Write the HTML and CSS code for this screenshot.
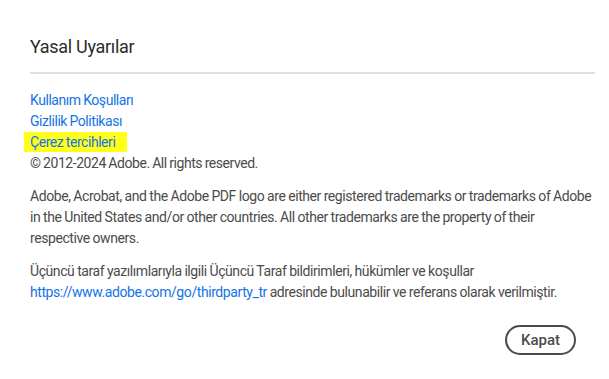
FILE: index.html
```html
<!DOCTYPE html>
<html lang="tr">
<head>
  <meta charset="UTF-8">
  <meta name="viewport" content="width=device-width, initial-scale=1.0">
  <title>Yasal Uyarılar</title>
  <link rel="stylesheet" href="styles.css">
</head>
<body>

  <div class="dialog">
    <h2 class="title">Yasal Uyarılar</h2>
    <hr class="divider">

    <ul class="links">
      <li><a href="#">Kullanım Koşulları</a></li>
      <li><a href="#">Gizlilik Politikası</a></li>
      <li><a href="#" class="marked">Çerez tercihleri</a></li>
      <li class="copy">© 2012-2024 Adobe. All rights reserved.</li>
    </ul>

    <p>Adobe, Acrobat, and the Adobe PDF logo are either registered trademarks or trademarks of Adobe in the United States and/or other countries. All other trademarks are the property of their respective owners.</p>

    <p>Üçüncü taraf yazılımlarıyla ilgili Üçüncü Taraf bildirimleri, hükümler ve koşullar <a href="#">https://www.adobe.com/go/thirdparty_tr</a> adresinde bulunabilir ve referans olarak verilmiştir.</p>

    <div class="actions">
      <button class="close">Kapat</button>
    </div>
  </div>

</body>
</html>
```

FILE: styles.css
```css
body {
  margin: 0;
  background: #ffffff;
  font-family: Roboto, "Liberation Sans", Arial, sans-serif;
  color: #4b4b4b;
}
.dialog {
  padding: 34px 14px 0 30px;
}
.title {
  margin: 0;
  font-size: 18px;
  font-weight: normal;
  letter-spacing: -0.3px;
  color: #2c2c2c;
  line-height: 26px;
}
.divider {
  margin: 12px 0 16px;
  border: none;
  border-top: 2px solid #e1e1e1;
}
.links {
  list-style: none;
  margin: 0;
  padding: 0;
  font-size: 14px;
  line-height: 21px;
  letter-spacing: -0.45px;
  word-spacing: -0.5px;
}
a {
  color: #1473e6;
  text-decoration: none;
}
.marked {
  background: #ffff1a;
  padding: 2px 12px 2px 6px;
  margin-left: -6px;
}
p {
  margin: 12px 3px 0 0;
  font-size: 14px;
  line-height: 21px;
  letter-spacing: -0.42px;
  word-spacing: -0.3px;
}
.actions {
  display: flex;
  justify-content: flex-end;
  margin-top: 22px;
  padding-right: 19px;
}
.close {
  font-family: inherit;
  font-size: 15px;
  font-weight: 500;
  color: #4b4b4b;
  background: #ffffff;
  border: 2px solid #4b4b4b;
  border-radius: 16px;
  height: 30px;
  padding: 0 14px;
}
```
